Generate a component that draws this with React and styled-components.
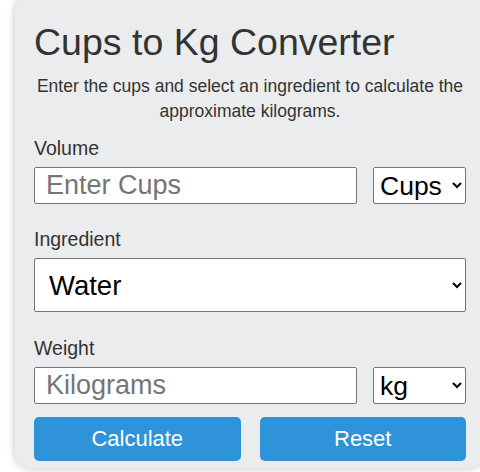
import styled, { createGlobalStyle } from "styled-components";

const GlobalStyle = createGlobalStyle`
  html, body {
    margin: 0;
    padding: 0;
    background: #ffffff;
    overflow: hidden;
  }
  body {
    font-family: "Liberation Sans", Arial, sans-serif;
  }
`

const Page = styled.div`
  width: 480px;
  height: 472px;
  overflow: hidden;
  padding-left: 15px;
  box-sizing: border-box;
`

const Card = styled.div`
  width: 470px;
  margin-top: -4px;
  padding: 25px 19px 0 19px;
  height: 472px;
  box-sizing: border-box;
  background: #ebeced;
  border-radius: 16px;
  box-shadow: 0 0 8px rgba(0, 0, 0, 0.25);
  color: #333333;
`

const Title = styled.h1`
  margin: 0;
  font-size: 37.5px;
  font-weight: normal;
  line-height: 42px;
  color: #333333;
`

const Intro = styled.p`
  margin: 11px 0 0 0;
  font-size: 17.5px;
  line-height: 25px;
  text-align: center;
  color: #333333;
`

const Label = styled.label`
  display: block;
  margin-top: ${(p) => p.$top}px;
  font-size: 19.5px;
  line-height: 22px;
  color: #333333;
`

const Row = styled.div`
  display: flex;
  gap: 16px;
  margin-top: 8px;
`

const TextInput = styled.input`
  flex: 1;
  min-width: 0;
  height: 37px;
  box-sizing: border-box;
  padding: 0 11px;
  border: 1px solid #767676;
  border-radius: 2px;
  background: #ffffff;
  font-family: "Liberation Sans", Arial, sans-serif;
  font-size: 27px;
  color: #000000;
  &::placeholder {
    color: #757575;
  }
`

const Select = styled.select`
  width: ${(p) => (p.$wide ? "100%" : "93px")};
  height: ${(p) => (p.$wide ? 54 : 37)}px;
  box-sizing: border-box;
  margin-top: ${(p) => (p.$wide ? 8 : 0)}px;
  padding: 0 0 0 ${(p) => (p.$wide ? 10 : 2)}px;
  border: 1px solid #767676;
  border-radius: 2px;
  background: #ffffff;
  font-family: "Liberation Sans", Arial, sans-serif;
  font-size: ${(p) => (p.$wide ? 27.5 : 26.5)}px;
  color: #000000;
`

const Buttons = styled.div`
  display: grid;
  grid-template-columns: 1fr 1fr;
  gap: 19px;
  margin-top: 13px;
`

const Button = styled.button`
  height: 44px;
  border: none;
  border-radius: 5px;
  background: #2e93d9;
  color: #ffffff;
  font-family: "Liberation Sans", Arial, sans-serif;
  font-size: 22px;
  cursor: pointer;
`

export default function App() {
  return (
    <>
      <GlobalStyle />
      <Page>
        <Card>
          <Title>Cups to Kg Converter</Title>
          <Intro>
            Enter the cups and select an ingredient to calculate the approximate kilograms.
          </Intro>

          <Label $top={13}>Volume</Label>
          <Row>
            <TextInput placeholder="Enter Cups" />
            <Select defaultValue="cups">
              <option value="cups">Cups</option>
            </Select>
          </Row>

          <Label $top={24}>Ingredient</Label>
          <Select $wide defaultValue="water">
            <option value="water">Water</option>
          </Select>

          <Label $top={25}>Weight</Label>
          <Row>
            <TextInput placeholder="Kilograms" readOnly />
            <Select defaultValue="kg">
              <option value="kg">kg</option>
            </Select>
          </Row>

          <Buttons>
            <Button>Calculate</Button>
            <Button>Reset</Button>
          </Buttons>
        </Card>
      </Page>
    </>
  );
}
